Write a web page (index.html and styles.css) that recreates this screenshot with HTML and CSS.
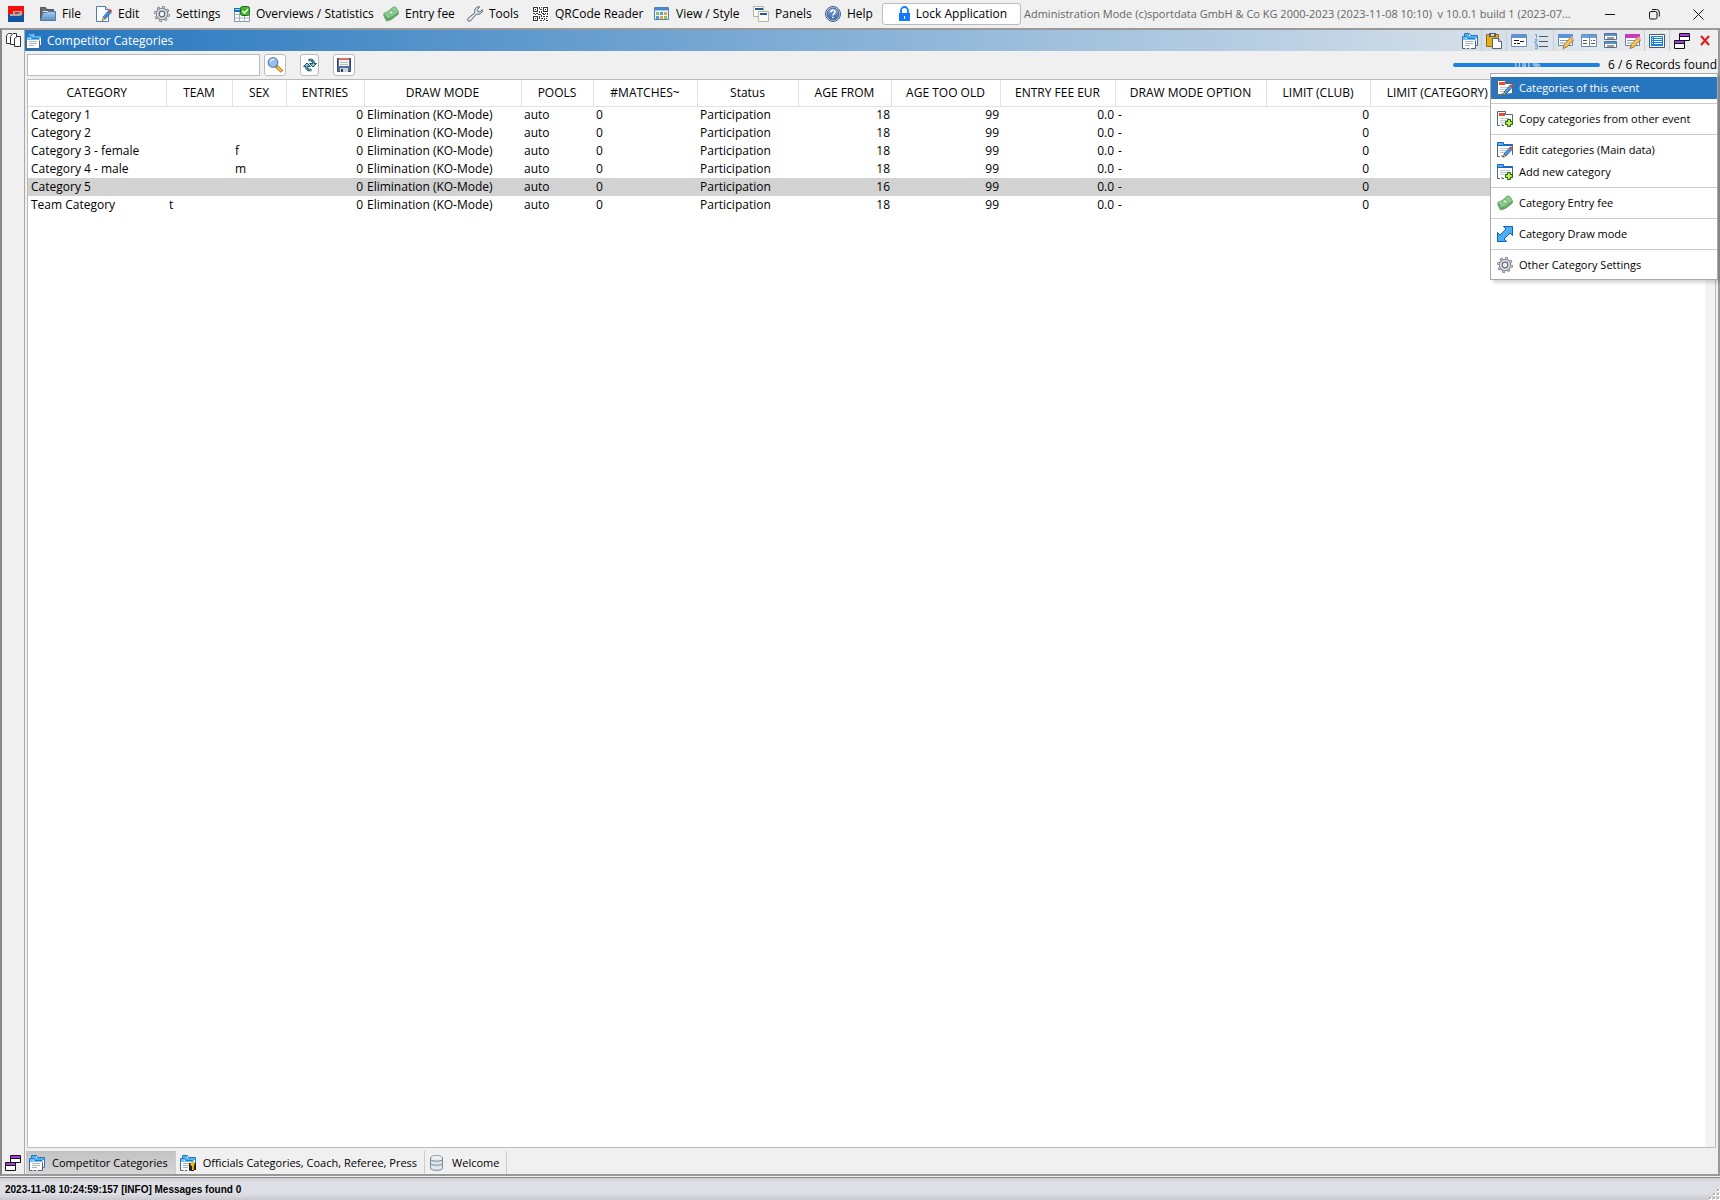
FILE: index.html
```html
<!DOCTYPE html>
<html lang="en">
<head>
    <meta charset="UTF-8">
    <meta name="viewport" content="width=device-width, initial-scale=1.0">
    <title>Competitor Categories</title>
    <link rel="stylesheet" href="styles.css">
</head>
<body>

    <!-- Icon definitions -->
    <svg class="icon-defs" aria-hidden="true">
        <defs>
            <linearGradient id="g-blue" x1="0" y1="0" x2="0" y2="1"><stop offset="0" stop-color="#a9cdf0"/><stop offset="1" stop-color="#5a8fc4"/></linearGradient>
            <linearGradient id="g-help" x1="0" y1="0" x2="0" y2="1"><stop offset="0" stop-color="#86a8d8"/><stop offset="1" stop-color="#3d65a5"/></linearGradient>
        </defs>
        <symbol id="logo" viewBox="0 0 16 16">
            <path fill="#f50f08" d="M0 0h16v8H0z"/><path fill="#0f55a0" d="M0 8h16v8H0z"/>
            <path fill="#b9a5a5" d="M5 5h9v4l-2 1H2V8h8V7H7v1H5z"/><path fill="#7a5560" d="M7 6h5v1H7z"/>
        </symbol>
        <symbol id="folder" viewBox="0 0 16 16">
            <path fill="#666c74" stroke="#555" d="M.5 14V1.500h5l1.500 2h6.500V7"/>
            <path fill="#e8eef5" d="M3 5h10v3H3z"/>
            <path fill="url(#g-blue)" stroke="#56789c" d="M.5 14.500L3 6.500h4l1-1h7.500v9z"/>
        </symbol>
        <symbol id="edit" viewBox="0 0 16 16">
            <path fill="#fff" stroke="#4f7fb5" d="M.5 .5h9l3 3v12H.5z"/>
            <path fill="#cfe0f2" stroke="#4f7fb5" d="M9.500 .5v3h3"/>
            <path fill="#3f8be0" stroke="#1d5aa8" stroke-width=".6" d="M7 11l6-7 2.500 2-6 7z"/>
            <path fill="#e0402c" d="M12 4.500L14 3l2 1.500-1 1.800z"/><path fill="#f3bd57" stroke="#775322" stroke-width=".5" d="M7 11l2.500 2L6 15z"/>
        </symbol>
        <symbol id="gear" viewBox="0 0 16 16">
            <circle cx="8" cy="8" r="6.700" fill="none" stroke="#6a717b" stroke-width="2.400" stroke-dasharray="2.630 2.630"/>
            <circle cx="8" cy="8" r="6.200" fill="#6a717b"/><circle cx="8" cy="8" r="5.400" fill="#d9dde2"/>
            <circle cx="8" cy="8" r="6.600" fill="none" stroke="#d9dde2" stroke-width="1.200" stroke-dasharray="1.600 3.580" stroke-dashoffset="-.5"/>
            <circle cx="8" cy="8" r="2.800" fill="#f3f3f3" stroke="#656d78" stroke-width="1.200"/>
        </symbol>
        <symbol id="stats" viewBox="0 0 16 16">
            <path fill="#fff" stroke="#8595a8" d="M.5 4.500h15v11H.5z"/><path stroke="#9eafc2" d="M1 8.500h15M1 12h15M5.500 5v11M10.500 5v11"/>
            <path fill="#1671c6" d="M0 2h9v4H0z"/><path fill="#9bd1ff" d="M1 3h7v1H1z"/>
            <rect x="6.500" y=".5" width="9" height="9" rx="2" fill="#49b52c" stroke="#1c6d17"/>
            <path fill="none" stroke="#fff" stroke-width="1.500" d="M8.500 5l2 2 3.500-4"/>
        </symbol>
        <symbol id="money" viewBox="0 0 16 16">
            <path fill="#62a866" stroke="#4e9355" stroke-width=".7" d="M.5 9l3 6 5-1.500 7-5.500-1-4-5 3z"/>
            <path fill="#8fcb90" stroke="#58a25e" stroke-width=".7" d="M.5 7.500L5 5.500 10.500.8l2.500.7L15.500 6l-6 4.500-5 2z"/>
            <ellipse cx="8" cy="6.500" rx="2.300" ry="2" fill="#c5e6bf" stroke="#58a25e" stroke-width=".7"/>
        </symbol>
        <symbol id="wrench" viewBox="0 0 16 16">
            <path fill="#e3e8ef" stroke="#56606e" d="M1 12.500l7-6C7 3 9 .7 12.700.7L10.500 3.500l.5 2 2 .5L15.400 3.500C15.600 7 13 9 9.500 8l-6 7-2 .3-.8-1z"/>
        </symbol>
        <symbol id="qr" viewBox="0 0 16 16">
            <path fill="#fff" d="M0 0h16v16H0z"/>
            <path fill="none" stroke="#333" d="M.5 1.500h4v4h-4zM10.500 1.500h4v4h-4zM.5 10.500h4v4h-4z"/>
            <path fill="#333" d="M2 3h1v1H2zM12 3h1v1h-1zM2 12h1v1H2zM6 1h1v2H6zM8 1h1v1H8zM7 3h2v1H7zM6 5h1v2H6zM8 5h1v2H8zM0 7h2v1H0zM3 7h2v1H3zM2 8h1v1H2zM5 8h3v1H5zM9 7h2v1H9zM12 7h1v1h-1zM14 7h1v2h-1zM10 8h2v1h-2zM6 10h1v3H6zM8 9h1v2H8zM10 10h2v1h-2zM13 10h2v1h-2zM8 12h2v1H8zM11 12h1v2h-1zM13 12h1v1h-1zM7 14h2v1H7zM10 14h1v1h-1zM13 14h2v1h-2z"/>
        </symbol>
        <symbol id="view" viewBox="0 0 16 16">
            <path fill="#edf4fc" stroke="#567fbd" d="M.5 1.500h14v12H.5z"/><path fill="#4889d3" d="M1 2h13v2H1z"/><path fill="#a9cdf2" d="M1 4h13v1H1z"/>
            <path fill="#91bf53" d="M2 6h3v3H2zM10 10h3v3h-3z"/><path fill="#4e9cda" d="M6 6h3v3H6zM2 10h3v3H2z"/><path fill="#f1a12b" d="M10 6h3v3h-3zM6 10h3v3H6z"/>
        </symbol>
        <symbol id="panels" viewBox="0 0 16 16">
            <path fill="#fbfbf5" stroke="#b5b5a3" d="M.5 .5h10v10H.5z"/><path fill="#255a97" d="M2 2h8v2H2z"/>
            <path fill="#fbfbf5" stroke="#b5b5a3" d="M5.500 5.500h10v10h-10z"/><path fill="#255a97" d="M7 7h7v2H7z"/>
        </symbol>
        <symbol id="help" viewBox="0 0 16 16">
            <circle cx="8" cy="8" r="7.500" fill="#e5ebf3" stroke="#3a587f"/><circle cx="8" cy="8" r="6" fill="url(#g-help)" stroke="#42669b"/>
            <path fill="none" stroke="#fff" stroke-width="1.600" d="M5.900 6.200C6 3.400 10.300 3.600 10.100 6.200 10 7.700 8 7.600 8 9.600M8 10.800v1.500"/>
        </symbol>
        <symbol id="lock" viewBox="0 0 16 16">
            <path fill="#1677ff" d="M3 7h11v8H3z"/><path fill="none" stroke="#1677ff" stroke-width="1.800" d="M5 7V4.500a3.500 3.500 0 0 1 7 0V7"/>
            <path fill="#fff" d="M8 10h1v3H8z"/>
        </symbol>
        <symbol id="pages" viewBox="0 0 16 16">
            <path fill="#fff" stroke="#333" d="M6.500 2V1.500h-3L1.500 3.500v8h4"/>
            <path fill="#fff" stroke="#333" d="M5.500 12.500v-8l2.500-3h3.500v11z"/><path fill="#fff" stroke="#333" d="M9.500 14.500v-8L12 4.500h3.500v10z"/>
        </symbol>
        <symbol id="cats" viewBox="0 0 16 16">
            <path fill="#fff" stroke="#2d74be" d="M2.500 4V.5h5l1 2h7v10H13"/><path fill="#49b5f5" d="M3 1h4v2h8v2H3z"/>
            <path fill="#f8fafc" stroke="#2d74be" d="M.5 13.500v-10h4l1 2h7.500v8"/><path fill="#66c4fa" d="M1 4h3v2h8.500v1H1z"/>
            <path fill="#fff" d="M1 7h12v8H1z"/><path stroke="#aab3bd" d="M3 8.500h8M3 10.500h8M3 12.500h5"/>
            <path fill="none" stroke="#536274" d="M.5 8v7.500h3M5 15.500h2M9 15.500h4.500V8"/>
        </symbol>
        <symbol id="paste" viewBox="0 0 16 16">
            <path fill="#e5ad16" stroke="#936b0b" d="M.5 1.500h12v12H.5z"/><path fill="#59616d" d="M3 0h7v4H3z"/><path fill="#ddd" d="M5 1h3v2H5z"/>
            <path fill="#fff" stroke="#52637a" d="M6.500 5.500h6l3 3v7h-9z"/><path fill="#dce6f0" stroke="#52637a" d="M12.500 5.500v3h3"/>
        </symbol>
        <symbol id="form" viewBox="0 0 16 16">
            <path fill="#fff" stroke="#6c8fc0" d="M.5 1.500h15v12H.5z"/><path fill="#5d94d5" d="M1 2h14v3H1z"/>
            <path stroke="#111" d="M3 7.500h5M3 10.500h2M6 10.500h3M9 8.500h4"/>
        </symbol>
        <symbol id="numbers" viewBox="0 0 16 16">
            <path fill="none" stroke="#6c9fd6" d="M1 1.500h1.500V5M1 6.500h2v1.500H1v2h2M1 11.500h2.500v4H1M1 13.500h2"/>
            <path stroke="#51585f" d="M5 3.500h9M5 8.500h9M5 13.500h9"/>
        </symbol>
        <symbol id="winedit" viewBox="0 0 16 16">
            <path fill="#fff" stroke="#6583ab" d="M.5 1.500h14v11H.5z"/><path class="win-head" d="M0 1h15v4H0z"/><path stroke="#8897aa" d="M2 7.500h9M2 10h5"/>
            <path fill="#f6c458" stroke="#8c6520" stroke-width=".8" d="M6 12l6.500-7.500 3 2.500L9 14l-4 1.500z"/><path fill="#f3a9a5" d="M12 4l2-.500L16 5.500 15 7z"/>
        </symbol>
        <symbol id="columns" viewBox="0 0 16 16">
            <path fill="#fff" stroke="#718cb0" d="M.5 1.500h15v12H.5z"/><path fill="#69a0db" d="M1 2h14v3H1z"/><path stroke="#718cb0" d="M8.500 2v12"/>
            <path stroke="#555" d="M2 7.500h4M2 10.500h4M10 7.500h1M12 7.500h2M10 10.500h4"/>
        </symbol>
        <symbol id="rows" viewBox="0 0 16 16">
            <path fill="#fff" stroke="#58718f" d="M1.500 .5h12v6h-12zM1.500 8.500h12v6h-12z"/><path fill="#5c92cc" d="M2 1h11v2H2zM2 9h11v2H2z"/><path stroke="#333" d="M4 5h7M4 13h7"/>
        </symbol>
        <symbol id="list" viewBox="0 0 16 16">
            <path fill="#fff" stroke="#49596a" d="M.5 1.500h15v13H.5z"/><path fill="#1184e8" d="M2 3h12v10H2z"/>
            <path stroke="#fff" d="M5 4.500h8M5 6.500h8M5 8.500h8M5 10.500h8M3 4.500h1M3 6.500h1M3 8.500h1M3 10.500h1"/>
        </symbol>
        <symbol id="windows" viewBox="0 0 16 16">
            <path fill="#fff" stroke="#111" d="M5.500 .5h10v7h-10z"/><path fill="#a93de8" d="M6 1h9v2H6z"/><path stroke="#111" d="M5 3.500h11"/>
            <path fill="#fff" stroke="#111" d="M.5 7.500h10v8H.5z"/><path fill="#a93de8" d="M1 8h9v2H1z"/><path stroke="#111" d="M0 10.500h11"/>
        </symbol>
        <symbol id="search" viewBox="0 0 16 16">
            <path stroke="#a96d14" stroke-width="3.500" d="M9 9l6 5.500"/><path stroke="#f4c744" stroke-width="2" d="M10 10l4.500 4"/>
            <circle cx="6" cy="5.500" r="4.800" fill="#8fc0f3" stroke="#6f83b7" stroke-width="1.300"/><path fill="#dcefff" d="M3 5a3 3 0 0 1 5-2.500z"/>
        </symbol>
        <symbol id="refresh" viewBox="0 0 16 16">
            <path fill="none" stroke="#19556b" stroke-width="2.600" d="M6.500 3h3l2 2v2M9.500 13h-3l-2-2V9"/>
            <path fill="#83c5d5" stroke="#19556b" d="M7.500 6.500h7L11 10zM8.500 9.500h-7L5 6z"/>
            <path fill="none" stroke="#83c5d5" stroke-width=".8" d="M6.500 3h3l2 2v2M9.500 13h-3l-2-2V9"/>
        </symbol>
        <symbol id="save" viewBox="0 0 16 16">
            <path fill="#536f9e" stroke="#354766" d="M1.500 1.500h13v13h-13z"/><path fill="#f4f4f4" d="M3 2h10v7H3z"/><path fill="#dc6d60" d="M3 1h10v2H3z"/>
            <path stroke="#bbb" d="M4 5.500h8M4 7.500h8"/><path fill="#ccd2da" d="M4 11h8v4H4z"/><path fill="#34425b" d="M5 12h2v3H5z"/>
        </symbol>
        <symbol id="sheet" viewBox="0 0 16 16">
            <path fill="#fff" stroke="#566577" d="M.5 14.500V.5h8v3h7V13"/><path fill="#fff" d="M1 4h14v9H1z"/><path fill="#ed4b2e" d="M2 2h6v3H2z"/>
            <path stroke="#bdc7d1" d="M3 7.500h9M3 9.500h7M3 11.500h5"/><path fill="none" stroke="#566577" d="M.5 12v2.500H3M5 13v1.500h2"/>
        </symbol>
        <symbol id="folderform" viewBox="0 0 16 16">
            <path fill="#fff" stroke="#566577" d="M.5 14.500v-12h15V13"/><path fill="#50b2f4" stroke="#1b68b9" d="M.5 3.500v-3h6v2h9v1z"/>
            <path stroke="#bdc7d1" d="M3 6.500h10M3 8.500h8M3 10.500h5"/><path fill="none" stroke="#566577" d="M.5 12v2.500H3M5 13v1.500h2"/>
        </symbol>
        <symbol id="pencil" viewBox="0 0 16 16">
            <path fill="#4b9be8" stroke="#164f8c" stroke-width=".8" d="M7 12l6-6.500 2 2-6 6.500z"/><path fill="#e34b34" d="M12.500 6L14 4l2 2-1 2z"/><path fill="#f5c471" stroke="#6b4c26" stroke-width=".6" d="M7 12l2 2-3 1.500z"/>
        </symbol>
        <symbol id="plus" viewBox="0 0 16 16">
            <path fill="#8fdc26" stroke="#226312" d="M10.500 8.500h3v2h2v3h-2v2h-3v-2h-2v-3h2z"/><path stroke="#e2f26a" d="M12 9.500v5M9.500 12h5"/>
        </symbol>
        <symbol id="person" viewBox="0 0 16 16">
            <path fill="#222" d="M9 8h7v7h-2v1h-3v-1H9z"/><circle cx="12.500" cy="9" r="2.200" fill="#f0ba20"/><path fill="#e2a812" d="M12 11h2v4h-2z"/>
        </symbol>
        <symbol id="arrows" viewBox="0 0 16 16">
            <path fill="#4caef7" stroke="#0f5fb4" d="M6.500 .5h9v9L13 7l-6 6 2.500 2.500h-9v-9L3 9l6-6z"/>
        </symbol>
        <symbol id="database" viewBox="0 0 16 16">
            <path fill="#d4dbe3" stroke="#7f8b98" d="M1.500 2.500C2 0 13 0 13.500 2.500v11C13 16 2 16 1.500 13.500z"/>
            <path fill="none" stroke="#f8fafb" d="M2 4c2 1.500 9 1.500 11 0M2 8c2 1.500 9 1.500 11 0M2 12c2 1.500 9 1.500 11 0"/>
            <path fill="none" stroke="#7f8b98" d="M2 5c2 1.500 9 1.500 11 0M2 9c2 1.500 9 1.500 11 0"/><ellipse cx="7.500" cy="2.500" rx="5" ry="1.500" fill="#f0f3f6"/>
        </symbol>
    </svg>

    <!-- Menu Bar -->
    <header class="menubar">
        <svg class="icon app-logo"><use href="#logo"/></svg>
        <nav class="menus">
            <button><svg class="icon"><use href="#folder"/></svg>File</button>
            <button><svg class="icon"><use href="#edit"/></svg>Edit</button>
            <button><svg class="icon"><use href="#gear"/></svg>Settings</button>
            <button><svg class="icon"><use href="#stats"/></svg>Overviews / Statistics</button>
            <button><svg class="icon"><use href="#money"/></svg>Entry fee</button>
            <button><svg class="icon"><use href="#wrench"/></svg>Tools</button>
            <button><svg class="icon crisp"><use href="#qr"/></svg>QRCode Reader</button>
            <button><svg class="icon"><use href="#view"/></svg>View / Style</button>
            <button><svg class="icon"><use href="#panels"/></svg>Panels</button>
            <button><svg class="icon"><use href="#help"/></svg>Help</button>
        </nav>
        <button class="lock-button"><svg class="icon"><use href="#lock"/></svg>Lock Application</button>
        <span class="app-title">Administration Mode (c)sportdata GmbH &amp; Co KG 2000-2023 (2023-11-08 10:10)&nbsp; v 10.0.1 build 1 (2023-07...</span>
        <div class="window-buttons">
            <button aria-label="Minimize"><svg class="caption"><path d="M0 5.500h10"/></svg></button>
            <button aria-label="Restore"><svg class="caption"><path d="M.5 4a1.500 1.500 0 0 1 1.500-1.500h4.500A1.500 1.500 0 0 1 8 4v4.500A1.500 1.500 0 0 1 6.500 10H2A1.500 1.500 0 0 1 .5 8.500zM3 .5h4.500A2.800 2.800 0 0 1 10.300 3v4.500"/></svg></button>
            <button aria-label="Close"><svg class="caption"><path d="M.5 .5l10 10M10.500 .5l-10 10"/></svg></button>
        </div>
    </header>

    <div class="workspace">
        <!-- Side strip -->
        <aside class="side-strip">
            <button aria-label="Documents"><svg class="icon"><use href="#pages"/></svg></button>
            <button aria-label="Windows"><svg class="icon"><use href="#windows"/></svg></button>
        </aside>

        <main class="panel">
            <div class="panel-title">
                <svg class="icon"><use href="#cats"/></svg>
                <h1>Competitor Categories</h1>
                <div class="panel-tools">
                    <button aria-label="Categories"><svg class="icon"><use href="#cats"/></svg></button>
                    <button class="split" aria-label="Paste"><svg class="icon"><use href="#paste"/></svg></button>
                    <button class="split" aria-label="Form"><svg class="icon"><use href="#form"/></svg></button>
                    <button aria-label="Numbering"><svg class="icon"><use href="#numbers"/></svg></button>
                    <button class="split" aria-label="Edit entry"><svg class="icon"><use href="#winedit"/></svg></button>
                    <button aria-label="Columns"><svg class="icon"><use href="#columns"/></svg></button>
                    <button aria-label="Rows"><svg class="icon"><use href="#rows"/></svg></button>
                    <button class="pink" aria-label="Edit style"><svg class="icon"><use href="#winedit"/></svg></button>
                    <button class="split" aria-label="List"><svg class="icon"><use href="#list"/></svg></button>
                    <button class="split" aria-label="Detach"><svg class="icon"><use href="#windows"/></svg></button>
                    <button class="close" aria-label="Close panel"><svg class="caption"><path d="M1 1l8 9M9 1l-8 9"/></svg></button>
                </div>
            </div>

            <div class="toolbar">
                <input class="search-field" type="text" aria-label="Search">
                <button aria-label="Find"><svg class="icon"><use href="#search"/></svg></button>
                <button class="small" aria-label="Refresh"><svg class="icon"><use href="#refresh"/></svg></button>
                <button aria-label="Save"><svg class="icon"><use href="#save"/></svg></button>
                <div class="progress">100 %</div>
                <span class="records">6 / 6 Records found</span>
            </div>

            <div class="table-area">
                <table class="grid">
                    <colgroup>
                        <col class="w-category"><col class="w-team"><col class="w-sex"><col class="w-entries"><col class="w-mode">
                        <col class="w-pools"><col class="w-matches"><col class="w-status"><col class="w-from"><col class="w-old">
                        <col class="w-fee"><col class="w-option"><col class="w-club"><col class="w-limit"><col>
                    </colgroup>
                    <thead>
                        <tr>
                            <th>CATEGORY</th><th>TEAM</th><th>SEX</th><th>ENTRIES</th><th>DRAW MODE</th><th>POOLS</th><th>#MATCHES~</th><th>Status</th><th>AGE FROM</th><th>AGE TOO OLD</th><th>ENTRY FEE EUR</th><th>DRAW MODE OPTION</th><th>LIMIT (CLUB)</th><th>LIMIT (CATEGORY)</th><th></th>
                        </tr>
                    </thead>
                    <tbody>
                        <tr><td>Category 1</td><td></td><td></td><td class="num">0</td><td>Elimination (KO-Mode)</td><td>auto</td><td>0</td><td>Participation</td><td class="num">18</td><td class="num">99</td><td class="num">0.0</td><td>-</td><td class="num">0</td><td></td><td></td></tr>
                        <tr><td>Category 2</td><td></td><td></td><td class="num">0</td><td>Elimination (KO-Mode)</td><td>auto</td><td>0</td><td>Participation</td><td class="num">18</td><td class="num">99</td><td class="num">0.0</td><td>-</td><td class="num">0</td><td></td><td></td></tr>
                        <tr><td>Category 3 - female</td><td></td><td>f</td><td class="num">0</td><td>Elimination (KO-Mode)</td><td>auto</td><td>0</td><td>Participation</td><td class="num">18</td><td class="num">99</td><td class="num">0.0</td><td>-</td><td class="num">0</td><td></td><td></td></tr>
                        <tr><td>Category 4 - male</td><td></td><td>m</td><td class="num">0</td><td>Elimination (KO-Mode)</td><td>auto</td><td>0</td><td>Participation</td><td class="num">18</td><td class="num">99</td><td class="num">0.0</td><td>-</td><td class="num">0</td><td></td><td></td></tr>
                        <tr class="selected"><td>Category 5</td><td></td><td></td><td class="num">0</td><td>Elimination (KO-Mode)</td><td>auto</td><td>0</td><td>Participation</td><td class="num">16</td><td class="num">99</td><td class="num">0.0</td><td>-</td><td class="num">0</td><td></td><td></td></tr>
                        <tr><td>Team Category</td><td>t</td><td></td><td class="num">0</td><td>Elimination (KO-Mode)</td><td>auto</td><td>0</td><td>Participation</td><td class="num">18</td><td class="num">99</td><td class="num">0.0</td><td>-</td><td class="num">0</td><td></td><td></td></tr>
                    </tbody>
                </table>
                <div class="scroll-track"></div>
            </div>

            <!-- Open panels -->
            <div class="tabs">
                <button class="active"><svg class="icon"><use href="#cats"/></svg>Competitor Categories</button>
                <button><svg class="icon"><use href="#cats"/><use href="#person"/></svg>Officials Categories, Coach, Referee, Press</button>
                <button><svg class="icon"><use href="#database"/></svg>Welcome</button>
            </div>

            <!-- Popup menu -->
            <div class="popup" role="menu">
                <button class="active" role="menuitem"><svg class="icon"><use href="#sheet"/><use href="#pencil"/></svg>Categories of this event</button>
                <hr>
                <button role="menuitem"><svg class="icon"><use href="#sheet"/><use href="#plus"/></svg>Copy categories from other event</button>
                <hr>
                <button role="menuitem"><svg class="icon"><use href="#folderform"/><use href="#pencil"/></svg>Edit categories (Main data)</button>
                <button role="menuitem"><svg class="icon"><use href="#folderform"/><use href="#plus"/></svg>Add new category</button>
                <hr>
                <button role="menuitem"><svg class="icon"><use href="#money"/></svg>Category Entry fee</button>
                <hr>
                <button role="menuitem"><svg class="icon"><use href="#arrows"/></svg>Category Draw mode</button>
                <hr>
                <button role="menuitem"><svg class="icon"><use href="#gear"/></svg>Other Category Settings</button>
            </div>
        </main>
    </div>

    <!-- Status Bar -->
    <footer class="statusbar">
        <span>2023-11-08 10:24:59:157 [INFO] Messages found 0</span>
        <svg class="grip"><path fill="#fff" d="M9 1h3v3H9zM5 5h3v3H5zM9 5h3v3H9zM1 9h3v3H1zM5 9h3v3H5zM9 9h3v3H9z"/><path fill="#b4b1a0" d="M9 1h2v2H9zM5 5h2v2H5zM9 5h2v2H9zM1 9h2v2H1zM5 9h2v2H5zM9 9h2v2H9z"/></svg>
    </footer>

</body>
</html>
```
FILE: styles.css
```css
* {
    margin: 0;
    padding: 0;
    box-sizing: border-box;
}

body {
    display: flex;
    flex-direction: column;
    height: 100vh;
    overflow: hidden;
    background-color: #f0f0f0;
    color: #000;
    font-family: "Open Sans", "Noto Sans", sans-serif;
    font-size: 12px;
    line-height: 16px;
}

button {
    display: flex;
    align-items: center;
    background: none;
    border: none;
    color: inherit;
    font: inherit;
    white-space: nowrap;
}

.icon-defs {
    position: absolute;
    width: 0;
    height: 0;
}

.icon {
    flex: none;
    width: 16px;
    height: 16px;
}

.crisp {
    shape-rendering: crispEdges;
}

.caption {
    width: 11px;
    height: 11px;
    fill: none;
    stroke: #111;
}

/* Menu Bar */
.menubar {
    display: flex;
    align-items: center;
    height: 28px;
    padding-left: 8px;
}

.app-logo {
    margin-right: 16px;
}

.menus {
    display: grid;
    grid-template-columns: 56px 58px 80px 149px 84px 66px 121px 99px 72px 57px;
}

.menus button {
    gap: 6px;
}

.lock-button {
    flex: none;
    justify-content: center;
    gap: 4px;
    width: 139px;
    height: 22px;
    background-color: #fff;
    border: 1px solid #bbb;
    border-radius: 3px;
}

.app-title {
    flex: 1;
    margin-left: 3px;
    color: #666;
    font-size: 11px;
    white-space: nowrap;
}

.window-buttons {
    display: flex;
}

.window-buttons button {
    justify-content: center;
    width: 44px;
    height: 26px;
}

/* Workspace */
.workspace {
    display: flex;
    flex: 1;
    min-height: 0;
    border: 2px solid #999;
    border-top-color: #999;
    border-left-color: #888;
}

.side-strip {
    display: flex;
    flex-direction: column;
    justify-content: space-between;
    align-items: center;
    width: 23px;
    padding: 2px 0 3px;
    border-right: 1px solid #aaa;
}

.panel {
    display: flex;
    flex: 1;
    flex-direction: column;
    position: relative;
    min-width: 0;
}

.panel-title {
    display: flex;
    align-items: center;
    height: 21px;
    padding-left: 1px;
    background: linear-gradient(to right, #2375be, #f0f0f0);
    color: #fff;
}

.panel-title h1 {
    margin-left: 5px;
    font-size: 12px;
    font-weight: normal;
}

.panel-tools {
    display: flex;
    align-items: center;
    margin-left: auto;
    padding-right: 2px;
}

.panel-tools button {
    justify-content: center;
    width: 22px;
    height: 21px;
}

.panel-tools .split {
    width: 25px;
    border-left: 1px solid #ccc;
}

.panel-tools .close .caption {
    stroke: #e81616;
    stroke-width: 2;
}

.win-head {
    fill: var(--head, #5b94d6);
}

.pink {
    --head: #c63bc0;
}

/* Search row */
.toolbar {
    display: flex;
    align-items: center;
    height: 28px;
    padding-left: 2px;
}

.search-field {
    width: 233px;
    height: 22px;
    margin-right: 4px;
    padding: 0 4px;
    background-color: #fff;
    border: 1px solid #bbb;
    font: inherit;
}

.toolbar button {
    justify-content: center;
    width: 22px;
    height: 22px;
    margin-right: 14px;
    background-color: #fff;
    border: 1px solid #bbb;
    border-radius: 3px;
}

.toolbar .small {
    width: 19px;
}

.progress {
    width: 147px;
    height: 4px;
    margin-left: auto;
    margin-right: 8px;
    background-color: #1e80e0;
    border-radius: 2px;
    color: #f0f0f0;
    font-size: 10px;
    line-height: 4px;
    text-align: center;
}

.records {
    padding-right: 1px;
}

/* Category table */
.table-area {
    display: flex;
    flex: 1;
    min-height: 0;
    margin: 0 2px;
    background-color: #fff;
    border: 1px solid #bbb;
}

.grid {
    flex: 1;
    align-self: flex-start;
    width: 100%;
    border-collapse: collapse;
    table-layout: fixed;
}

.grid th {
    height: 26px;
    border-right: 1px solid #e2e2e2;
    border-bottom: 1px solid #e2e2e2;
    font-weight: normal;
    text-align: center;
    white-space: nowrap;
}

.grid th:nth-last-child(-n+2) {
    border-right: none;
}

.grid td {
    height: 18px;
    padding: 0 2px 0 3px;
    white-space: nowrap;
}

.grid .num {
    padding-right: 1px;
    text-align: right;
}

.grid .selected {
    background-color: #d2d2d2;
}

.w-category { width: 138px; }
.w-team { width: 66px; }
.w-sex { width: 54px; }
.w-entries { width: 78px; }
.w-mode { width: 157px; }
.w-pools { width: 72px; }
.w-matches { width: 104px; }
.w-status { width: 101px; }
.w-from { width: 93px; }
.w-old { width: 109px; }
.w-fee { width: 115px; }
.w-option { width: 151px; }
.w-club { width: 104px; }
.w-limit { width: 134px; }

.scroll-track {
    width: 10px;
    background-color: #f3f3f3;
}

/* Tabs */
.tabs {
    display: flex;
    height: 26px;
    padding: 3px 0 0 1px;
}

.tabs button {
    gap: 7px;
    margin-right: 1px;
    padding: 0 7px 0 3px;
    border-right: 1px solid #ccc;
    font-size: 11px;
}

.tabs .active {
    background: linear-gradient(#c2c2c2, #d6d6d6);
}

/* Popup menu */
.popup {
    position: absolute;
    top: 43px;
    right: 0;
    width: 228px;
    padding: 3px 0;
    background-color: #fff;
    border: 1px solid #aaa;
    box-shadow: 3px 3px 3px rgba(0, 0, 0, 0.15);
}

.popup button {
    gap: 6px;
    width: 100%;
    height: 22px;
    padding-left: 6px;
    font-size: 11px;
}

.popup .active {
    background-color: #2675bf;
    color: #fff;
}

.popup hr {
    height: 1px;
    margin: 4px 0;
    border: none;
    background-color: #ccc;
}

/* Status Bar */
.statusbar {
    display: flex;
    align-items: center;
    justify-content: space-between;
    height: 23px;
    margin-top: 1px;
    padding-left: 5px;
    background: linear-gradient(#cfd0d4, #dedfe5 20%, #dedfe5 70%, #c9cacf);
    border-top: 1px solid #888;
    font: bold 10px "Liberation Sans", Arial, sans-serif;
}

.grip {
    align-self: flex-end;
    width: 12px;
    height: 12px;
}
```
